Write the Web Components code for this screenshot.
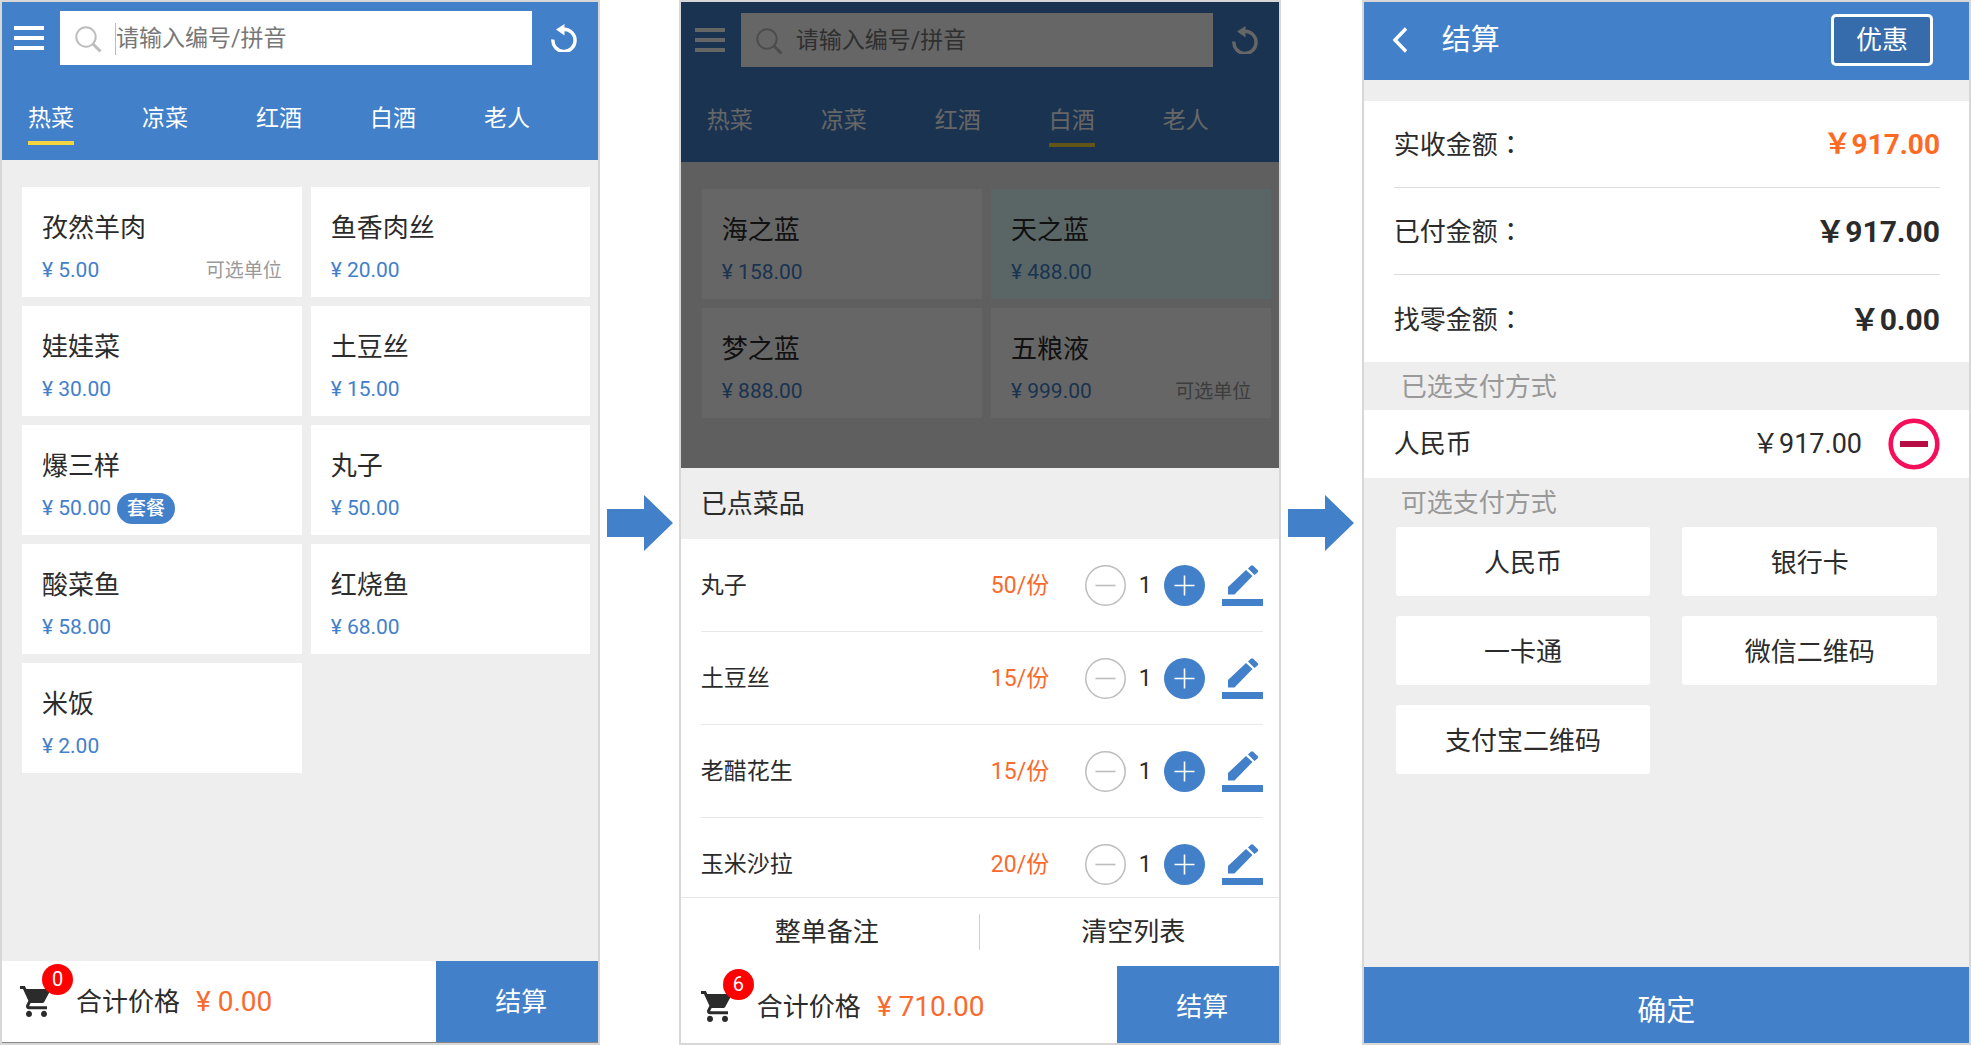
<!DOCTYPE html>
<html lang="zh-CN">
<head>
<meta charset="utf-8">
<title>点餐流程</title>
<style>
  body {
    margin: 0;
    background: #fff;
    color: #2b2b2b;
    font-family: Roboto, "Noto Sans CJK SC", sans-serif;
    --blue: #4280ca;
    --orange: #f96a2d;
    --grey: #eeeeee;
  }
</style>
</head>
<body>
<order-flow></order-flow>

<script>
const base = `
  * { box-sizing: border-box; }
  button { appearance: none; border: 0; margin: 0; padding: 0; background: none; font: inherit; color: inherit; cursor: pointer; }
  svg { display: block; }
`;

function define(name, css, html) {
  customElements.define(name, class extends HTMLElement {
    connectedCallback() {
      if (this.shadowRoot) return;
      const root = this.attachShadow({ mode: "open" });
      const body = typeof html === "function" ? html(this) : html;
      root.innerHTML = `<style>${base}${css}</style>${body}`;
    }
  });
}

/* Arrow between two steps */
define("flow-arrow", `
  :host { display: flex; align-items: center; justify-content: center; min-width: 66px; }
`, `<svg width="66" height="56" viewBox="0 0 66 56" aria-hidden="true"><path fill="#4280ca" d="M0 14H37V0L66 28L37 56V42H0Z"/></svg>`);

/* Frame of one screen */
define("phone-screen", `
  :host { display: flex; flex-direction: column; min-width: 0; border: 2px solid #d7d7d7; background: var(--grey); overflow: hidden; }
`, `<slot></slot>`);

/* Blue bar with the search box and the category tabs */
define("menu-header", `
  :host { display: block; background: var(--blue); color: #fff; overflow: hidden; }
  .search { display: flex; align-items: center; padding: 9px 0 0 12px; }
  :host([roomy]) .search { padding: 11px 0 0 14px; }
  .menu { width: 30px; margin-right: 16px; }
  .box { flex: 1; min-width: 0; height: 54px; display: flex; align-items: center; gap: 13px; padding: 2px 15px 0; background: #fff; }
  .field { flex: 1; display: flex; align-items: center; }
  .caret { width: 1px; height: 32px; background: #bbb; }
  input { flex: 1; min-width: 0; border: 0; outline: 0; padding: 0; background: none; font: 23px/32px Roboto, "Noto Sans CJK SC", sans-serif; color: #333; }
  input::placeholder { color: #777; opacity: 1; }
  .reload { width: 66px; padding-right: 2px; display: flex; justify-content: center; }
  nav { display: flex; gap: 68px; padding: 38px 0 15px 26px; white-space: nowrap; }
  nav a { flex: none; color: #fff; text-decoration: none; font-size: 23px; line-height: 32px; padding-bottom: 6px; border-bottom: 4px solid transparent; }
  nav a[aria-current] { border-color: #f5d442; }
`, el => `
  <div class="search">
    <button class="menu" aria-label="菜单"><svg width="30" height="24" viewBox="0 0 30 24"><path stroke="#fff" stroke-width="4" d="M0 2H30M0 12H30M0 22H30"/></svg></button>
    <label class="box">
      <svg width="27" height="27" viewBox="0 0 27 27" fill="none" stroke="#bdbdbd"><circle cx="11" cy="11" r="9.7" stroke-width="2"/><path stroke-width="3" d="M18 18L25.5 25.5"/></svg>
      <span class="field">${el.hasAttribute("focused") ? '<span class="caret"></span>' : ""}<input type="text" placeholder="请输入编号/拼音" aria-label="搜索"></span>
    </label>
    <button class="reload" aria-label="刷新"><svg width="26" height="28" viewBox="0 0 26 28"><path fill="none" stroke="#fff" stroke-width="3.4" d="M1.9 15.5A11.1 11.1 0 1 0 13 5.3"/><path fill="#fff" d="M5 5.6L13.5 0V11.4Z"/></svg></button>
  </div>
  <nav>${["热菜", "凉菜", "红酒", "白酒", "老人"].map(t => `<a href="#"${t === el.getAttribute("current") ? ' aria-current="page"' : ""}>${t}</a>`).join("")}</nav>
`);

define("dish-grid", `
  :host { display: grid; grid-template-columns: 1fr 1fr; gap: 9px; padding: 27px 8px 50px 20px; }
  :host([roomy]) { padding-left: 21px; }
`, `<slot></slot>`);

define("dish-card", `
  :host { display: block; height: 110px; padding: 25px 20px 0; background: #fff; }
  :host([picked]) { background: #e2ffff; }
  .name { font-size: 26px; line-height: 32px; }
  .info { display: flex; align-items: center; height: 31px; margin-top: 11px; line-height: 31px; }
  .price { font-size: 21px; color: var(--blue); }
  .set { margin-left: 6px; padding: 0 10px; border-radius: 16px; background: var(--blue); color: #fff; font-size: 19px; font-weight: 500; }
  .unit { margin-left: auto; font-size: 19px; color: #999; }
`, el => `
  <div class="name"><slot></slot></div>
  <div class="info"><span class="price">¥ ${el.getAttribute("price")}</span>${el.hasAttribute("combo") ? '<span class="set">套餐</span>' : ""}${el.hasAttribute("units") ? '<span class="unit">可选单位</span>' : ""}</div>
`);

/* Total and checkout at the foot of a screen */
define("cart-bar", `
  :host { display: flex; margin-top: auto; height: 77px; background: #fff; font-size: 26px; line-height: 34px; }
  :host([tall]) { height: 82px; border-bottom: 1px solid #888; }
  .sum { flex: 1; display: flex; align-items: center; padding-left: 18px; }
  :host([roomy]) .sum { padding: 4px 0 0 20px; }
  .cart { position: relative; width: 30px; margin-right: 26px; }
  .count { position: absolute; left: 22px; top: -22px; width: 31px; height: 31px; border-radius: 50%; background: #fe0000; color: #fff; font-size: 20px; line-height: 31px; text-align: center; }
  .total { margin-left: 16px; color: var(--orange); font-size: 28px; }
  button { width: 162px; padding-left: 8px; background: var(--blue); color: #fff; }
  :host([roomy]) button { padding-top: 4px; }
`, el => `
  <div class="sum">
    <span class="cart"><svg width="30" height="31" viewBox="1 2 20 20" preserveAspectRatio="none" fill="#2b2b2b"><path d="M7 18c-1.1 0-1.99.9-1.99 2S5.9 22 7 22s2-.9 2-2-.9-2-2-2zM1 2v2h2l3.6 7.59-1.35 2.45c-.16.28-.25.61-.25.96 0 1.1.9 2 2 2h12v-2H7.42c-.14 0-.25-.11-.25-.25l.03-.12.9-1.63h7.45c.75 0 1.41-.41 1.75-1.03l3.58-6.49A1 1 0 0 0 20 4H5.21l-.94-2H1zm16 16c-1.1 0-1.99.9-1.99 2s.89 2 1.99 2 2-.9 2-2-.9-2-2-2z"/></svg><span class="count">${el.getAttribute("count")}</span></span>
    <span>合计价格</span><span class="total">¥ ${el.getAttribute("total")}</span>
  </div>
  <button>结算</button>
`);

/* Content that lies behind a veil while the sheet is open */
define("dimmed-area", `
  :host { display: block; position: relative; }
  .veil { position: absolute; inset: 0; background: rgba(0, 0, 0, .6); }
`, `<slot></slot><div class="veil"></div>`);

define("order-sheet", `
  :host { flex: 1; display: flex; flex-direction: column; min-height: 0; background: #fff; }
  h2 { margin: 0; padding: 2px 20px 0; background: var(--grey); font-size: 26px; font-weight: 400; line-height: 69px; }
  .list { flex: 1 1 0; min-height: 0; overflow: hidden; padding: 0 16px 0 20px; }
  .actions { display: flex; align-items: center; height: 69px; border-top: 1px solid #e8e8e8; font-size: 26px; line-height: 34px; }
  .actions button { flex: 1; height: 36px; line-height: 36px; }
  .actions button:first-child { border-right: 1px solid #d0d0d0; padding-right: 6px; }
  .actions button:last-child { padding-left: 8px; }
`, `
  <h2>已点菜品</h2>
  <div class="list"><slot></slot></div>
  <div class="actions"><button>整单备注</button><button>清空列表</button></div>
`);

define("order-row", `
  :host { display: flex; align-items: center; height: 93px; border-bottom: 1px solid #e8e8e8; font-size: 23px; line-height: 32px; }
  span { padding-top: 2px; }
  .name { flex: 1; }
  .price { color: var(--orange); margin-right: 36px; }
  .qty { width: 38px; text-align: center; }
  .edit { margin-left: 17px; }
`, el => `
  <span class="name"><slot></slot></span>
  <span class="price">${el.getAttribute("price")}/份</span>
  <button aria-label="减少"><svg width="41" height="41" viewBox="0 0 41 41" fill="none" stroke="#bdbdbd"><circle cx="20.5" cy="20.5" r="19.7" stroke-width="1.5"/><path stroke-width="1.6" d="M10.5 20.5H30.5"/></svg></button>
  <span class="qty">1</span>
  <button aria-label="增加"><svg width="41" height="41" viewBox="0 0 41 41"><circle cx="20.5" cy="20.5" r="20.5" fill="#4280ca"/><path stroke="#fff" stroke-width="1.6" d="M10.5 20.5H30.5M20.5 10.5V30.5"/></svg></button>
  <button class="edit" aria-label="编辑"><svg width="41" height="41" viewBox="0 0 41 41" fill="#4280ca"><path d="M0 34H41V41H0ZM6 29.5V22L24 5L30.5 11L12.5 29.5ZM26 3.400L28.800 .8Q30 -.3 31.200 .8L35.600 5Q36.800 6.200 35.600 7.400L32.500 10Z"/></svg></button>
`);

define("pay-header", `
  :host { display: flex; align-items: center; height: 78px; padding: 0 36px 2px 28px; background: var(--blue); color: #fff; }
  h1 { flex: 1; margin: 0 0 0 34px; font-size: 29px; font-weight: 400; line-height: 40px; }
  .deal { width: 102px; height: 52px; border: 3px solid #fff; border-radius: 5px; background: #376cac; font-size: 26px; line-height: 44px; }
`, `
  <button aria-label="返回"><svg width="16" height="26" viewBox="0 0 16 26" fill="none" stroke="#fff" stroke-width="3.5"><path d="M14 1.5L3 13L14 24.5"/></svg></button>
  <h1>结算</h1>
  <button class="deal">优惠</button>
`);

define("amount-list", `
  :host { display: block; margin-top: 21px; padding: 0 29px 0 30px; background: #fff; }
  ::slotted(amount-row:not(:last-child)) { border-bottom: 1px solid #dcdcdc; }
`, `<slot></slot>`);

define("amount-row", `
  :host { display: flex; align-items: center; justify-content: space-between; height: 87px; font-size: 26px; line-height: 34px; }
  .colon { font-family: "Noto Sans CJK TC", sans-serif; }
  .value { padding-top: 2px; font-size: 30px; font-weight: 700; }
  :host([due]) .value { font-size: 28px; color: #ff6a22; }
`, el => `<span><slot></slot><span class="colon" lang="zh-TW">：</span></span><span class="value">￥${el.getAttribute("value")}</span>`);

define("section-label", `
  :host { display: block; padding: 3px 37px 0; font-size: 26px; line-height: 45px; color: #999; }
`, `<slot></slot>`);

define("paid-row", `
  :host { display: flex; align-items: center; height: 68px; padding: 0 29px 0 30px; background: #fff; font-size: 26px; line-height: 34px; }
  .name { flex: 1; }
  .value { font-size: 27px; }
  button { margin-left: 26px; }
`, el => `
  <span class="name"><slot></slot></span><span class="value">￥${el.getAttribute("value")}</span>
  <button aria-label="移除"><svg width="52" height="52" viewBox="0 0 52 52"><circle cx="26" cy="26" r="23.3" fill="none" stroke="#f50f5b" stroke-width="4.6"/><path stroke="#b80c45" stroke-width="6" d="M12 26H40"/></svg></button>
`);

define("pay-options", `
  :host { display: grid; grid-template-columns: 1fr 1fr; gap: 20px 32px; padding: 1px 32px 0; }
  button { height: 69px; padding-bottom: 3px; border-radius: 3px; background: #fff; font-size: 26px; }
`, el => el.getAttribute("options").split(",").map(t => `<button>${t}</button>`).join(""));

define("confirm-bar", `
  :host { display: block; margin-top: auto; background: var(--blue); color: #fff; }
  button { width: 100%; height: 76px; padding-top: 6px; font-size: 29px; }
`, `<button><slot></slot></button>`);

define("order-flow", `
  :host { display: flex; min-height: 100vh; }
  .menu { flex: 600 1 0; }
  .first { flex: 79 1 0; }
  .order { flex: 602 1 0; }
  .second { flex: 81 1 0; }
  .pay { flex: 609 1 0; }
`, `
  <phone-screen class="menu">
    <menu-header current="热菜" focused></menu-header>
    <dish-grid>
      <dish-card price="5.00" units>孜然羊肉</dish-card>
      <dish-card price="20.00">鱼香肉丝</dish-card>
      <dish-card price="30.00">娃娃菜</dish-card>
      <dish-card price="15.00">土豆丝</dish-card>
      <dish-card price="50.00" combo>爆三样</dish-card>
      <dish-card price="50.00">丸子</dish-card>
      <dish-card price="58.00">酸菜鱼</dish-card>
      <dish-card price="68.00">红烧鱼</dish-card>
      <dish-card price="2.00">米饭</dish-card>
    </dish-grid>
    <cart-bar tall count="0" total="0.00"></cart-bar>
  </phone-screen>
  <flow-arrow class="first"></flow-arrow>
  <phone-screen class="order">
    <dimmed-area>
      <menu-header current="白酒" roomy></menu-header>
      <dish-grid roomy>
        <dish-card price="158.00">海之蓝</dish-card>
        <dish-card price="488.00" picked>天之蓝</dish-card>
        <dish-card price="888.00">梦之蓝</dish-card>
        <dish-card price="999.00" units>五粮液</dish-card>
      </dish-grid>
    </dimmed-area>
    <order-sheet>
      <order-row price="50">丸子</order-row>
      <order-row price="15">土豆丝</order-row>
      <order-row price="15">老醋花生</order-row>
      <order-row price="20">玉米沙拉</order-row>
    </order-sheet>
    <cart-bar roomy count="6" total="710.00"></cart-bar>
  </phone-screen>
  <flow-arrow class="second"></flow-arrow>
  <phone-screen class="pay">
    <pay-header></pay-header>
    <amount-list>
      <amount-row due value="917.00">实收金额</amount-row>
      <amount-row value="917.00">已付金额</amount-row>
      <amount-row value="0.00">找零金额</amount-row>
    </amount-list>
    <section-label>已选支付方式</section-label>
    <paid-row value="917.00">人民币</paid-row>
    <section-label>可选支付方式</section-label>
    <pay-options options="人民币,银行卡,一卡通,微信二维码,支付宝二维码"></pay-options>
    <confirm-bar>确定</confirm-bar>
  </phone-screen>
`);
</script>
</body>
</html>
